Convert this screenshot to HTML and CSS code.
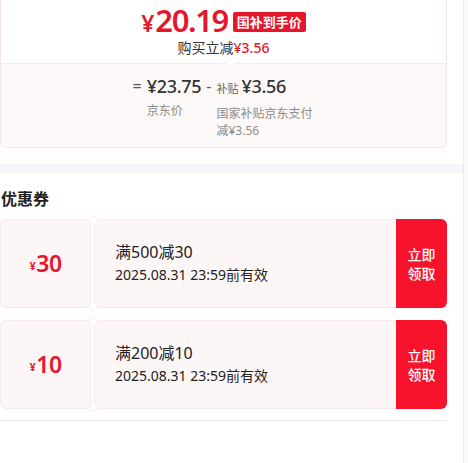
FILE: index.html
```html
<!DOCTYPE html>
<html lang="zh-CN">
<head>
<meta charset="utf-8">
<link rel="stylesheet" href="styles.css">
</head>
<body>
<div class="page">
  <main class="main">
    <section class="price-wrap">
      <div class="price-card">
        <div class="price-top">
          <div class="price-line">
            <span class="yen">¥</span><span class="amount">20.19</span>
            <span class="badge">国补到手价</span>
          </div>
          <div class="save-line">购买立减<span class="save-red">¥3.56</span></div>
        </div>
        <div class="price-bottom">
          <div class="formula">
            <span class="op">=</span>
            <div class="fcol">
              <div class="fval">¥23.75</div>
              <div class="flabel">京东价</div>
            </div>
            <span class="op op-minus">-</span>
            <div class="fcol fcol-sub">
              <div class="fval"><span class="fsmall">补贴</span>¥3.56</div>
              <div class="flabel">国家补贴京东支付减¥3.56</div>
            </div>
          </div>
        </div>
      </div>
    </section>
    <div class="band"></div>
    <section class="coupons">
      <h2 class="coupons-title">优惠券</h2>
      <div class="coupon">
        <div class="c-left"><span class="c-yen">¥</span>30</div>
        <div class="c-mid">
          <div class="c-rule">满500减30</div>
          <div class="c-time">2025.08.31 23:59前有效</div>
        </div>
        <div class="c-btn">立即<br>领取</div>
      </div>
      <div class="coupon">
        <div class="c-left"><span class="c-yen">¥</span>10</div>
        <div class="c-mid">
          <div class="c-rule">满200减10</div>
          <div class="c-time">2025.08.31 23:59前有效</div>
        </div>
        <div class="c-btn">立即<br>领取</div>
      </div>
      <div class="divider"></div>
    </section>
  </main>
  <div class="track"></div>
</div>
</body>
</html>
```

FILE: styles.css
```css
* { box-sizing: border-box; margin: 0; padding: 0; }
html, body { height: 100%; }
body {
  background: #fff;
  font-family: "Noto Sans", "Noto Sans CJK SC", sans-serif;
  color: #333;
  overflow: hidden;
}
.page { display: flex; height: 463px; }
.main { width: 463px; flex: none; }
.track { flex: 1; border-left: 1px solid #ebebeb; background: #fafafa; }

.price-wrap { padding-right: 16px; }
.price-card {
  border: 1px solid #f6e4e7;
  border-top: none;
  border-radius: 0 0 6px 6px;
  overflow: hidden;
}
.price-top {
  height: 63px;
  display: flex;
  flex-direction: column;
  align-items: center;
  padding-top: 4px;
}
.price-line {
  display: flex;
  align-items: baseline;
  color: #e8162c;
  height: 33px;
  line-height: 33px;
}
.yen { font-size: 23px; font-weight: 600; margin-right: 1px; line-height: 33px; }
.amount { font-size: 31px; font-weight: 600; letter-spacing: -1.4px; line-height: 33px; }
.badge {
  align-self: center;
  margin-left: 5px;
  margin-top: 2px;
  background: #e8162c;
  color: #fff;
  font-size: 13px;
  font-weight: 700;
  line-height: 20px;
  padding: 0 4px;
  border-radius: 2px;
}
.save-line { font-size: 14px; line-height: 20px; color: #333; margin-top: 1px; }
.save-red { color: #e8162c; font-weight: 500; }

.price-bottom {
  position: relative;
  background: #fdf8f8;
  border-top: 1px solid #f8eaea;
  height: 84px;
  display: flex;
  justify-content: center;
  padding-top: 10px;
}
.price-bottom::before {
  content: "";
  position: absolute;
  left: 226px;
  top: -1px;
  border-left: 4px solid transparent;
  border-right: 4px solid transparent;
  border-top: 4px solid #fff;
}
.formula { display: flex; align-items: flex-start; padding-left: 0; }
.op { font-size: 16px; line-height: 24px; color: #555; margin-right: 5px; }
.op-minus { margin: 0 5px 0 5px; }
.fcol { display: flex; flex-direction: column; }
.fcol-sub { width: 98px; }
.fval { font-size: 18px; line-height: 24px; color: #333; font-weight: 500; white-space: nowrap; letter-spacing: -0.3px; }
.fsmall { font-size: 11px; color: #666; font-weight: 400; margin-right: 3px; letter-spacing: 0; }
.flabel { font-size: 12px; line-height: 17px; color: #8c8c8c; margin-top: 4px; }

.band { height: 9px; background: #f5f6fa; margin-top: 16px; }

.coupons { padding-right: 16px; padding-top: 14px; }
.coupons-title {
  font-size: 16px;
  font-weight: 700;
  line-height: 24px;
  color: #222;
  padding-left: 1px;
  margin-bottom: 8px;
}
.coupon {
  position: relative;
  display: flex;
  height: 89px;
  margin-bottom: 12px;
}
.coupon::before, .coupon::after {
  content: "";
  position: absolute;
  left: 89px;
  width: 7px;
  height: 7px;
  border-radius: 50%;
  background: #fff;
  border: 1px solid #f9eef0;
}
.coupon::before { top: -3px; }
.coupon::after { bottom: -3px; }
.c-left {
  width: 91px;
  flex: none;
  background: #fdf6f7;
  border: 1px solid #f7e9eb;
  border-radius: 6px;
  display: flex;
  align-items: center;
  justify-content: center;
  color: #e8162c;
  font-size: 23px;
  font-weight: 600;
  letter-spacing: -0.5px;
  padding-bottom: 2px;
}
.c-yen { font-size: 11px; font-weight: 700; margin-right: 1px; margin-top: 6px; }
.c-mid {
  flex: 1;
  margin-left: 3px;
  background: #fdf6f7;
  border: 1px solid #f7e9eb;
  border-right: none;
  border-radius: 6px 0 0 6px;
  display: flex;
  flex-direction: column;
  justify-content: center;
  padding-left: 20px;
  padding-bottom: 2px;
}
.c-rule { font-size: 16px; line-height: 24px; color: #222; }
.c-time { font-size: 14px; line-height: 22px; color: #222; }
.c-btn {
  width: 51px;
  flex: none;
  background: #f7132b;
  color: #fff;
  border-radius: 0 6px 6px 0;
  font-size: 14px;
  line-height: 19px;
  display: flex;
  align-items: center;
  justify-content: center;
  text-align: center;
  font-weight: 500;
}
.divider { height: 1px; background: #ececec; margin-top: -1px; }
```
